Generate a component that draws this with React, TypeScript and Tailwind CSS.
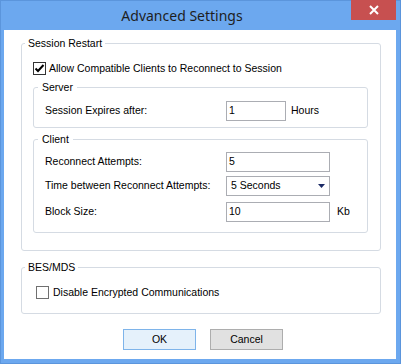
import React from 'react';

const CheckBox: React.FC<{ checked?: boolean }> = ({ checked }) => (
   <span className={`w-[13px] h-[13px] shrink-0 border bg-white flex items-center justify-center ${checked ? 'border-[#333333]' : 'border-[#707070]'}`}>
      {checked && (
         <svg width="11" height="11" viewBox="0 0 11 11">
            <path d="M1.5 5.5 L4 8 L9.5 2" fill="none" stroke="#000" strokeWidth="2" />
         </svg>
      )}
   </span>
);

const TextBox: React.FC<{ value: string; width: string }> = ({ value, width }) => (
   <div className={`${width} h-[20px] border border-[#abadb3] bg-white pl-[2px] flex items-center`}>
      {value}
   </div>
);

const Row: React.FC<{ label: string; className?: string; children: React.ReactNode }> = ({ label, className, children }) => (
   <div className={`flex items-center h-[20px] ${className ?? ''}`}>
      <span className="w-[181px] shrink-0">{label}</span>
      {children}
   </div>
);

const App: React.FC = () => {
   return (
      <div className="w-[401px] h-[364px] bg-[#6ca8ef] border border-[#5b95dc] flex flex-col font-['Liberation_Sans',Arial,sans-serif] text-[10.5px] text-black">
         {/* title bar */}
         <div className="h-[29px] flex shrink-0">
            <div className="flex-1 pl-[12px] text-center font-['Noto_Sans',sans-serif] text-[14px] leading-[29px] text-[#1e1e1e]">
               Advanced Settings
            </div>
            <div className="w-[45px] h-[20px] -mt-[1px] mr-[4px] bg-[#c75050] flex items-center justify-center">
               <svg width="10" height="10" viewBox="0 0 10 10">
                  <path d="M1 1 L9 9 M9 1 L1 9" stroke="#fff" strokeWidth="2" />
               </svg>
            </div>
         </div>

         {/* client area */}
         <div className="flex-1 bg-white ml-[3px] mr-[4px] mb-[4px] pt-[6px] pl-[17px] pr-[15px] flex flex-col">
            <fieldset className="border border-[#d5dbe3] rounded-[3px] pl-[11px] pr-[12px] pb-[17px]">
               <legend className="-ml-[8px] px-[3px] leading-[14px]">Session Restart</legend>
               <div className="mt-[12px] flex items-center h-[13px]">
                  <CheckBox checked />
                  <span className="ml-[3px]">Allow Compatible Clients to Reconnect to Session</span>
               </div>

               <fieldset className="mt-[5px] border border-[#d5dbe3] rounded-[3px] pl-[11px] pb-[6px]">
                  <legend className="-ml-[7px] px-[4px] leading-[14px]">Server</legend>
                  <Row label="Session Expires after:" className="mt-[7px]">
                     <TextBox value="1" width="w-[60px]" />
                     <span className="ml-[5px]">Hours</span>
                  </Row>
               </fieldset>

               <fieldset className="mt-[4px] border border-[#d5dbe3] rounded-[3px] pl-[11px] pb-[10px]">
                  <legend className="-ml-[7px] px-[4px] leading-[14px]">Client</legend>
                  <Row label="Reconnect Attempts:" className="mt-[6px]">
                     <TextBox value="5" width="w-[104px]" />
                  </Row>
                  <Row label="Time between Reconnect Attempts:" className="mt-[4px]">
                     <div className="w-[104px] h-[20px] border border-[#abadb3] bg-white pl-[4px] pr-[4px] flex items-center justify-between">
                        <span>5 Seconds</span>
                        <svg width="7" height="4" viewBox="0 0 7 4">
                           <path d="M0 0 H7 L3.5 4 Z" fill="#1b2a66" />
                        </svg>
                     </div>
                  </Row>
                  <Row label="Block Size:" className="mt-[6px]">
                     <TextBox value="10" width="w-[104px]" />
                     <span className="ml-[7px]">Kb</span>
                  </Row>
               </fieldset>
            </fieldset>

            <fieldset className="mt-[9px] border border-[#d5dbe3] rounded-[3px] pl-[14px] pb-[14px]">
               <legend className="-ml-[11px] px-[3px] leading-[14px]">BES/MDS</legend>
               <div className="mt-[12px] flex items-center h-[13px]">
                  <CheckBox />
                  <span className="ml-[4px]">Disable Encrypted Communications</span>
               </div>
            </fieldset>

            <div className="mt-[15px] flex justify-center gap-[14px] pl-[4px]">
               <button className="w-[73px] h-[21px] bg-[#e5f1fb] border border-[#7eb4ea]">OK</button>
               <button className="w-[73px] h-[21px] bg-[#e1e1e1] border border-[#adadad]">Cancel</button>
            </div>
         </div>
      </div>
   );
};

export default App;
